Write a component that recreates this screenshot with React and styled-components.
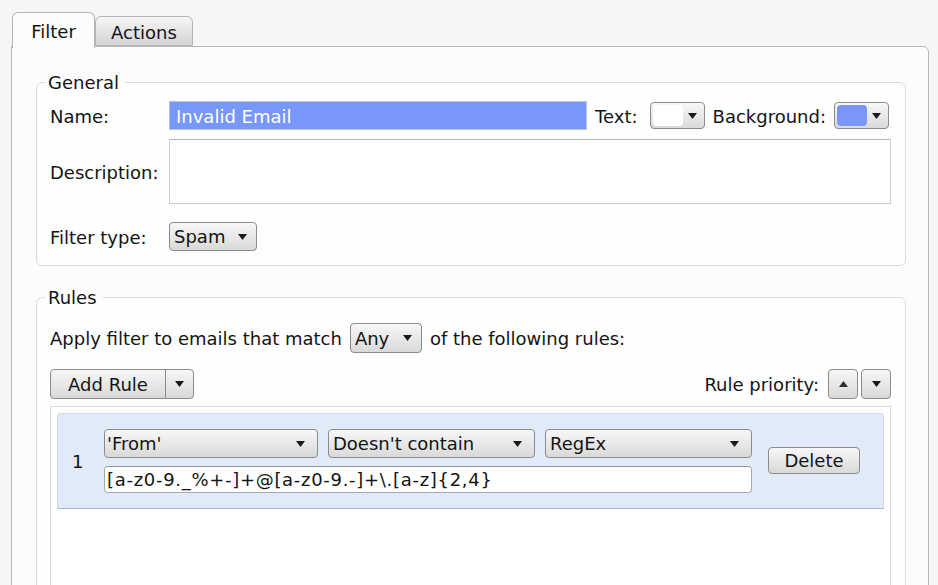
import React from 'react';
import styled, { createGlobalStyle } from 'styled-components';

const GlobalStyle = createGlobalStyle`
	html, body {
		margin: 0;
		padding: 0;
		background: #f6f6f6;
		overflow: hidden;
	}
	body {
		font-family: "DejaVu Sans", Verdana, sans-serif;
		font-size: 18px;
		color: #141414;
	}
`;

const Page = styled.div`
	box-sizing: border-box;
	height: 640px;
	padding: 12px 9px 0 11px;
	display: flex;
	flex-direction: column;
`;

const TabRow = styled.div`
	display: flex;
	align-items: flex-end;
	padding-left: 1px;
	margin-bottom: -2px;
	position: relative;
	z-index: 1;
`;

const Tab = styled.div`
	box-sizing: border-box;
	width: ${(p) => p.$width}px;
	height: ${(p) => (p.$active ? 36 : 30)}px;
	margin-bottom: ${(p) => (p.$active ? 0 : 2)}px;
	border: 1px solid #b4b4b4;
	border-bottom: ${(p) => (p.$active ? 'none' : '1px solid #b4b4b4')};
	border-radius: 6px 6px 0 0;
	background: ${(p) => (p.$active ? '#fcfcfc' : 'linear-gradient(#f6f6f6, #d4d4d4)')};
	display: flex;
	align-items: center;
	justify-content: center;
	padding-top: 2px;
`;

const Panel = styled.div`
	flex: 1;
	display: flex;
	flex-direction: column;
	border: 1px solid #b8b8b8;
	border-radius: 0 6px 0 0;
	background: #fcfcfc;
	padding: 25px 22px 0 24px;
`;

const Group = styled.fieldset`
	margin: 0;
	min-width: 0;
	border: 1px solid #d4dce6;
	border-radius: 6px;
	padding: ${(p) => p.$padTop}px 14px 14px 13px;
	background: #fefefe;
	${(p) => p.$grow && 'flex: 1; display: flex; flex-direction: column;'}
	& + & {
		margin-top: 21px;
	}
`;

const Legend = styled.legend`
	padding: 0 6px 0 3px;
	margin-left: -5px;
	line-height: 21px;
`;

const Row = styled.div`
	display: flex;
	align-items: center;
	margin-top: ${(p) => p.$gap || 0}px;
`;

const Label = styled.span`
	width: 119px;
	flex-shrink: 0;
	padding-top: 1px;
`;

const InlineLabel = styled.span`
	margin: 0 ${(p) => p.$right ?? 8}px 0 ${(p) => p.$left ?? 9}px;
	padding-top: 1px;
	white-space: nowrap;
`;

const NameInput = styled.div`
	box-sizing: border-box;
	flex: 1;
	height: 29px;
	background: #7797fb;
	border: 1px solid #b7c4da;
	color: #fff;
	padding: 1px 0 0 6px;
	display: flex;
	align-items: center;
`;

const TextArea = styled.div`
	box-sizing: border-box;
	flex: 1;
	height: 65px;
	background: #fff;
	border: 1px solid #c9ced6;
	border-top-color: #b0b4ba;
`;

const Button = styled.div`
	box-sizing: border-box;
	width: ${(p) => p.$w}px;
	height: ${(p) => p.$h || 29}px;
	border: 1px solid #8b8b8b;
	border-radius: 4px;
	background: linear-gradient(#f7f7f7, #d9d9d9);
	display: flex;
	align-items: center;
	justify-content: ${(p) => p.$justify || 'space-between'};
	padding: 0 ${(p) => p.$pr ?? 10}px 0 ${(p) => p.$pl ?? 4}px;
	flex-shrink: 0;
	white-space: nowrap;
`;

const Swatch = styled.div`
	width: 30px;
	height: 21px;
	border-radius: 4px;
	background: ${(p) => p.$color};
`;

const SplitButton = styled.div`
	box-sizing: border-box;
	display: flex;
	height: 30px;
	border: 1px solid #8b8b8b;
	border-radius: 4px;
	background: linear-gradient(#f7f7f7, #d9d9d9);
`;

const SplitMain = styled.div`
	width: 114px;
	display: flex;
	align-items: center;
	justify-content: center;
	border-right: 1px solid #8b8b8b;
`;

const SplitArrow = styled.div`
	width: 27px;
	display: flex;
	align-items: center;
	justify-content: center;
`;

const Spacer = styled.div`
	flex: ${(p) => (p.$fixed ? `0 0 ${p.$fixed}px` : 1)};
`;

const PriorityButtons = styled.div`
	display: flex;
	gap: 3px;
	margin-left: 9px;
`;

const RuleList = styled.div`
	flex: 1;
	margin-top: 7px;
	border: 1px solid #d9d9d9;
	background: #fff;
	padding: 6px;
`;

const RuleItem = styled.div`
	display: flex;
	align-items: center;
	height: 96px;
	box-sizing: border-box;
	background: #e1eaf8;
	border: 1px solid #d0d9e6;
	border-bottom-color: #a9b6c8;
	border-radius: 4px 4px 1px 1px;
`;

const RuleNumber = styled.span`
	box-sizing: border-box;
	width: 46px;
	padding-left: 14px;
`;

const RuleFields = styled.div`
	width: 648px;
	display: flex;
	flex-direction: column;
	gap: 8px;
`;

const SelectRow = styled.div`
	display: flex;
	gap: 10px;
`;

const TextInput = styled.div`
	box-sizing: border-box;
	height: 27px;
	background: #fff;
	border: 1px solid #aaaaaa;
	border-top-color: #999;
	border-radius: 4px;
	padding-left: 2px;
	display: flex;
	align-items: center;
	white-space: nowrap;
	letter-spacing: 0.7px;
`;

const DeleteWrap = styled.div`
	margin-left: 16px;
	margin-top: -2px;
`;

const Caret = ({ up }) => (
	<svg width="9" height="6" viewBox="0 0 9 6">
		<polygon points={up ? '0,6 9,6 4.5,0' : '0,0 9,0 4.5,6'} fill={up ? '#2e2e2e' : '#1a1a1a'} />
	</svg>
);

const Select = ({ w, h, pl, pr, children }) => (
	<Button $w={w} $h={h} $pl={pl} $pr={pr}>
		<span>{children}</span>
		<Caret />
	</Button>
);

const ColorPicker = ({ color }) => (
	<Button $w={55} $h={27} $pl={2} $pr={7}>
		<Swatch $color={color} />
		<Caret />
	</Button>
);

export default function App() {
	return (
		<>
			<GlobalStyle />
			<Page>
				<TabRow>
					<Tab $active $width={83}>Filter</Tab>
					<Tab $width={98}>Actions</Tab>
				</TabRow>
				<Panel>
					<Group $padTop={8}>
						<Legend>General</Legend>
						<Row>
							<Label>Name:</Label>
							<NameInput>Invalid Email</NameInput>
							<InlineLabel $left={8} $right={12}>Text:</InlineLabel>
							<ColorPicker color="#ffffff" />
							<InlineLabel $left={8}>Background:</InlineLabel>
							<ColorPicker color="#7a96f8" />
							<Spacer $fixed={2} />
						</Row>
						<Row $gap={9}>
							<Label>Description:</Label>
							<TextArea />
						</Row>
						<Row $gap={18}>
							<Label>Filter type:</Label>
							<Select w={88} pl={4} pr={9}>Spam</Select>
						</Row>
					</Group>
					<Group $padTop={15} $grow>
						<Legend>Rules</Legend>
						<Row>
							<InlineLabel $left={0}>Apply filter to emails that match</InlineLabel>
							<Select w={72} h={30} pl={4} pr={9}>Any</Select>
							<InlineLabel $left={8}>of the following rules:</InlineLabel>
						</Row>
						<Row $gap={16}>
							<SplitButton>
								<SplitMain>Add Rule</SplitMain>
								<SplitArrow>
									<Caret />
								</SplitArrow>
							</SplitButton>
							<Spacer />
							<span>Rule priority:</span>
							<PriorityButtons>
								<Button $w={30} $h={30} $pl={0} $pr={0} $justify="center">
									<Caret up />
								</Button>
								<Button $w={30} $h={30} $pl={0} $pr={0} $justify="center">
									<Caret />
								</Button>
							</PriorityButtons>
						</Row>
						<RuleList>
							<RuleItem>
								<RuleNumber>1</RuleNumber>
								<RuleFields>
									<SelectRow>
										<Select w={214} pl={2} pr={12}>'From'</Select>
										<Select w={207} pl={4} pr={12}>Doesn't contain</Select>
										<Select w={207} pl={4} pr={12}>RegEx</Select>
									</SelectRow>
									<TextInput>[a-z0-9._%+-]+@[a-z0-9.-]+\.[a-z]{'{'}2,4{'}'}</TextInput>
								</RuleFields>
								<DeleteWrap>
									<Button $w={92} $h={27} $pl={0} $pr={0} $justify="center">
										Delete
									</Button>
								</DeleteWrap>
							</RuleItem>
						</RuleList>
					</Group>
				</Panel>
			</Page>
		</>
	);
}
